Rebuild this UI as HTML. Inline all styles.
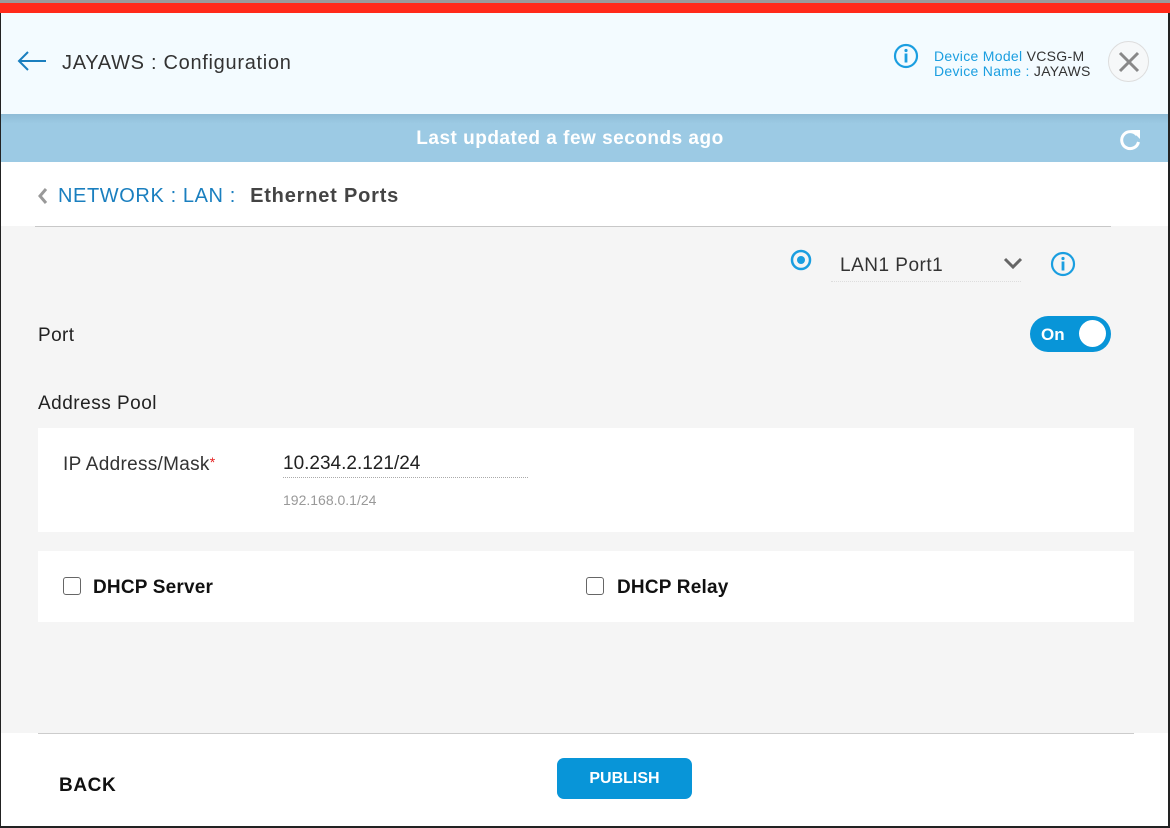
<!DOCTYPE html>
<html><head><meta charset="utf-8"><style>
*{margin:0;padding:0;box-sizing:border-box}
body{width:1170px;height:828px;position:relative;overflow:hidden;background:#fff;font-family:"Liberation Sans",sans-serif;color:#222}
.a{position:absolute;white-space:nowrap}
</style></head><body>
<div class="a" style="left:0;top:0;width:1170px;height:3px;background:#9a9a9a"></div>
<div class="a" style="left:0;top:3px;width:1170px;height:10px;background:#ff2a1a"></div>
<div class="a" style="left:0;top:13px;width:1170px;height:101px;background:#f3fbff"></div>
<svg class="a" style="left:16px;top:50px" width="32" height="22" viewBox="0 0 32 22"><path d="M30 11H3M12 2L3 11l9 9" fill="none" stroke="#1a7fbf" stroke-width="2"/></svg>
<div class="a" style="left:62px;top:52px;font-size:20px;letter-spacing:0.7px;color:#333">JAYAWS : Configuration</div>
<svg class="a" style="left:893px;top:43px" width="26" height="26" viewBox="0 0 26 26"><circle cx="13" cy="13" r="11" fill="none" stroke="#1a9ee0" stroke-width="2.2"/><circle cx="13" cy="7.5" r="1.6" fill="#1a9ee0"/><rect x="11.6" y="10.5" width="2.8" height="9" fill="#1a9ee0"/></svg>
<div class="a" style="left:934px;top:49px;font-size:14px;line-height:15px;letter-spacing:0.3px;color:#1a9ee0">Device Model <span style="color:#333">VCSG-M</span><br>Device Name : <span style="color:#333">JAYAWS</span></div>
<div class="a" style="left:1108px;top:41px;width:41px;height:41px;border:1px solid #ddd;border-radius:50%;background:#f6f8f9"></div>
<svg class="a" style="left:1116px;top:49px" width="26" height="26" viewBox="0 0 26 26"><path d="M4 4L22 22M22 4L4 22" stroke="#888" stroke-width="3"/></svg>
<div class="a" style="left:0;top:114px;width:1170px;height:48px;background:linear-gradient(#8fbcd6,#9ccae4 20%,#9ccae4)"></div>
<div class="a" style="left:0;top:128px;width:1140px;text-align:center;font-size:19px;letter-spacing:0.5px;font-weight:bold;color:#fff">Last updated a few seconds ago</div>
<svg class="a" style="left:1117px;top:127px" width="26" height="26" viewBox="0 0 26 26"><path d="M20 8A8.5 8.5 0 1 0 21.5 15" fill="none" stroke="#fff" stroke-width="3"/><path d="M14 3h9v9z" fill="#fff"/></svg>
<svg class="a" style="left:37px;top:187px" width="12" height="18" viewBox="0 0 12 18"><path d="M9 2L3 9l6 7" fill="none" stroke="#999" stroke-width="3"/></svg>
<div class="a" style="left:58px;top:185px;font-size:20px;letter-spacing:0.6px;color:#1a7fbf">NETWORK : LAN : <span style="color:#444;margin-left:8px;font-weight:bold;letter-spacing:0.8px">Ethernet Ports</span></div>
<div class="a" style="left:0;top:226px;width:1170px;height:507px;background:#f5f5f5"></div>
<div class="a" style="left:35px;top:226px;width:1076px;height:1px;background:#c8c8c8"></div>
<svg class="a" style="left:790px;top:249px" width="22" height="22" viewBox="0 0 22 22"><circle cx="11" cy="11" r="9" fill="none" stroke="#1a9ee0" stroke-width="2.5"/><circle cx="11" cy="11" r="4" fill="#1a9ee0"/></svg>
<div class="a" style="left:840px;top:255px;font-size:19px;letter-spacing:0.5px;color:#333">LAN1 Port1</div>
<div class="a" style="left:831px;top:281px;width:190px;border-top:1px dotted #ddd"></div>
<svg class="a" style="left:1003px;top:256px" width="20" height="14" viewBox="0 0 20 14"><path d="M2 3l8 8 8-8" fill="none" stroke="#666" stroke-width="3"/></svg>
<svg class="a" style="left:1050px;top:251px" width="26" height="26" viewBox="0 0 26 26"><circle cx="13" cy="13" r="11" fill="none" stroke="#1a9ee0" stroke-width="2.2"/><circle cx="13" cy="7.5" r="1.6" fill="#1a9ee0"/><rect x="11.6" y="10.5" width="2.8" height="9" fill="#1a9ee0"/></svg>
<div class="a" style="left:38px;top:325px;font-size:19px;letter-spacing:0.4px;color:#222">Port</div>
<div class="a" style="left:1030px;top:316px;width:81px;height:36px;border-radius:18px;background:#0895d8"></div>
<div class="a" style="left:1041px;top:325px;font-size:17px;font-weight:bold;color:#fff">On</div>
<div class="a" style="left:1079px;top:320px;width:27px;height:27px;border-radius:50%;background:#fff"></div>
<div class="a" style="left:38px;top:393px;font-size:19px;letter-spacing:0.5px;color:#222">Address Pool</div>
<div class="a" style="left:38px;top:428px;width:1096px;height:104px;background:#fff"></div>
<div class="a" style="left:63px;top:454px;font-size:19px;letter-spacing:0.3px;color:#333">IP Address/Mask<span style="color:#e52020;font-size:14px;vertical-align:top">*</span></div>
<div class="a" style="left:283px;top:453px;font-size:19px;color:#222">10.234.2.121/24</div>
<div class="a" style="left:283px;top:477px;width:245px;border-top:1px dotted #aaa"></div>
<div class="a" style="left:283px;top:492px;font-size:14px;color:#999">192.168.0.1/24</div>
<div class="a" style="left:38px;top:551px;width:1096px;height:71px;background:#fff"></div>
<div class="a" style="left:63px;top:577px;width:18px;height:18px;border:1.5px solid #666;border-radius:3px"></div>
<div class="a" style="left:93px;top:577px;font-size:19px;font-weight:bold;letter-spacing:0.2px;color:#111">DHCP Server</div>
<div class="a" style="left:586px;top:577px;width:18px;height:18px;border:1.5px solid #666;border-radius:3px"></div>
<div class="a" style="left:617px;top:577px;font-size:19px;font-weight:bold;letter-spacing:0.2px;color:#111">DHCP Relay</div>
<div class="a" style="left:38px;top:733px;width:1096px;height:1px;background:#ccc"></div>
<div class="a" style="left:59px;top:775px;font-size:19px;letter-spacing:0.6px;font-weight:bold;color:#111">BACK</div>
<div class="a" style="left:557px;top:758px;width:135px;height:41px;border-radius:7px;background:#0895d8"></div>
<div class="a" style="left:557px;top:770px;width:135px;text-align:center;font-size:16px;font-weight:bold;color:#fff">PUBLISH</div>
<div class="a" style="left:0;top:13px;width:1px;height:815px;background:#222"></div>
<div class="a" style="left:1168px;top:13px;width:2px;height:815px;background:#222"></div>
<div class="a" style="left:0;top:826px;width:1170px;height:2px;background:#222"></div>
</body></html>
